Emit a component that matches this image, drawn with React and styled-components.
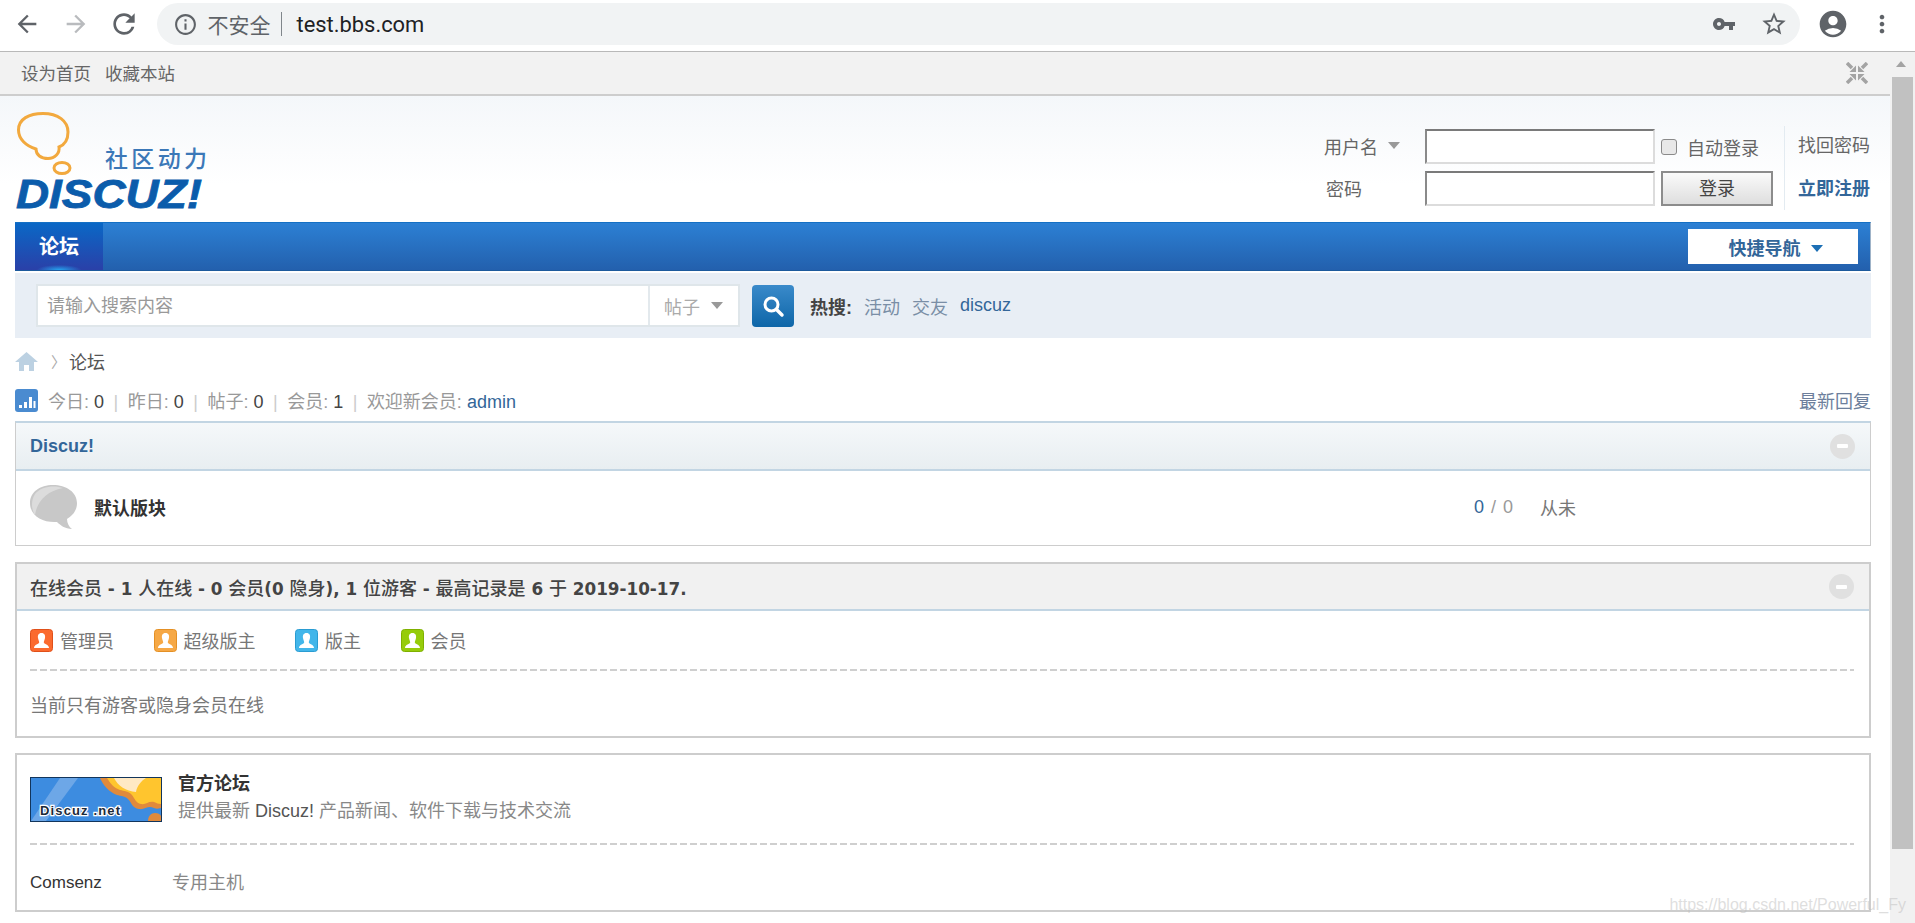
import React from "react";
import styled, { createGlobalStyle } from "styled-components";
import {
  MdArrowBack,
  MdArrowForward,
  MdRefresh,
  MdInfoOutline,
  MdVpnKey,
  MdStarBorder,
  MdAccountCircle,
  MdMoreVert,
} from "react-icons/md";

const GlobalStyle = createGlobalStyle`
  html, body {
    margin: 0;
    height: 100%;
    overflow: hidden;
    background: #fff;
  }
  body {
    font-family: "Liberation Sans", "Noto Sans CJK SC", sans-serif;
    font-size: 18px;
    color: #444;
  }
  * {
    box-sizing: border-box;
  }
`;

const Window = styled.div`
  height: 923px;
  display: flex;
  flex-direction: column;
  overflow: hidden;
  position: relative;
`;

const BrowserBar = styled.div`
  height: 52px;
  flex: none;
  display: flex;
  align-items: center;
  padding: 0 9px 3px 3px;
  border-bottom: 1px solid #b9b9b9;
  background: #fff;
`;

const BarButton = styled.div`
  width: 48.5px;
  height: 36px;
  flex: none;
  display: flex;
  align-items: center;
  justify-content: center;
  color: ${(p) => (p.$off ? "#b9bbbe" : "#5f6368")};
  font-size: ${(p) => p.$size || 28}px;
`;

const AddressPill = styled.div`
  flex: 1;
  height: 42px;
  margin: 0 9px 0 8px;
  padding: 0 12px 0 16px;
  display: flex;
  align-items: center;
  background: #f1f3f4;
  border-radius: 21px;
  color: #5f6368;
`;

const SecureLabel = styled.span`
  margin-left: 10px;
  font-size: 21px;
  color: #5f6368;
`;

const PillDivider = styled.span`
  width: 1px;
  height: 24px;
  margin: 0 15px 0 10px;
  background: #80868b;
`;

const Url = styled.span`
  flex: 1;
  font-family: Roboto, sans-serif;
  font-size: 21.9px;
  color: #202124;
`;

const PillIcons = styled.div`
  display: flex;
  align-items: center;
  gap: 24px;
  font-size: 24px;
`;

const MainRow = styled.div`
  flex: 1;
  display: flex;
  min-height: 0;
`;

const Viewport = styled.div`
  flex: 1;
  min-width: 0;
  background: #fff;
`;

const Scrollbar = styled.div`
  width: 25px;
  flex: none;
  background: #f1f1f1;
`;

const ScrollArrow = styled.div`
  height: 25px;
  padding: 9px 0 0 6px;
  &::before {
    content: "";
    display: block;
    width: 0;
    border-left: 5.5px solid transparent;
    border-right: 5.5px solid transparent;
    border-bottom: 6px solid #a3a3a3;
  }
`;

const ScrollThumb = styled.div`
  width: 21px;
  height: 772px;
  margin-left: 2px;
  background: #c1c1c1;
`;

const Toolbar = styled.div`
  height: 44px;
  padding: 0 22px 0 21px;
  display: flex;
  align-items: center;
  justify-content: space-between;
  background: #f2f2f2;
  border-bottom: 2px solid #cdcdcd;
  font-size: 17.5px;
  color: #666;
`;

const ToolLinks = styled.div`
  display: flex;
  gap: 14px;
  margin-bottom: 2px;
`;

const Header = styled.div`
  height: 126px;
  padding: 0 19px 0 15px;
  display: flex;
  justify-content: space-between;
  background: linear-gradient(#f4f7fa, #fff 70%);
`;

const Logo = styled.svg`
  width: 192px;
  height: 102px;
  margin-top: 14px;
  flex: none;
  overflow: visible;
`;

const LoginForm = styled.div`
  display: flex;
  align-items: flex-start;
  margin-top: 33px;
`;

const LoginFields = styled.div`
  display: grid;
  grid-template-columns: 95px 230px 112px;
  grid-auto-rows: 35px;
  column-gap: 6px;
  row-gap: 7px;
  align-items: center;
`;

const FieldLabel = styled.div`
  display: flex;
  align-items: center;
  margin-bottom: 2px;
  padding-left: ${(p) => p.$indent || 0}px;
  color: #666;
`;

const Caret = styled.span`
  display: inline-block;
  width: 0;
  margin-left: ${(p) => p.$gap || 10}px;
  margin-top: ${(p) => p.$drop || 0}px;
  border-left: 6px solid transparent;
  border-right: 6px solid transparent;
  border-top: 7px solid ${(p) => p.$color || "#999"};
`;

const TextInput = styled.div`
  height: 35px;
  background: #fff;
  border: 2px solid;
  border-color: #7a7a7a #dcdcdc #dcdcdc #8a8a8a;
`;

const AutoLogin = styled.label`
  display: flex;
  align-items: center;
  color: #666;
`;

const CheckBox = styled.span`
  width: 16px;
  height: 16px;
  margin-right: 10px;
  border: 1px solid #8a8a8a;
  border-radius: 3px;
  background: #e8e8e8;
`;

const LoginButton = styled.div`
  height: 35px;
  padding-bottom: 3px;
  display: flex;
  align-items: center;
  justify-content: center;
  border: 2px solid #8c8c8c;
  background: linear-gradient(#fafafa, #dedede);
  color: #444;
`;

const LoginLinks = styled.div`
  width: 87px;
  height: 84px;
  margin: -3px 0 0 11px;
  padding: 8px 0 0 13px;
  display: flex;
  flex-direction: column;
  gap: 18px;
  border-left: 1px solid #e3ebf1;
  line-height: 25px;
  white-space: nowrap;
`;

const LoginLink = styled.span`
  color: ${(p) => (p.$strong ? "#336699" : "#666")};
  font-weight: ${(p) => (p.$strong ? 700 : 400)};
`;

const Content = styled.div`
  padding: 0 19px 0 15px;
`;

const NavBar = styled.div`
  height: 49px;
  display: flex;
  align-items: center;
  justify-content: space-between;
  background: linear-gradient(#2c80d4, #2360ad);
  border-top: 1px solid #1570c4;
  border-bottom: 1px solid #1d5a9c;
  border-right: 1px solid #9fb3c8;
`;

const NavTab = styled.div`
  position: relative;
  width: 88px;
  height: 100%;
  padding-bottom: 2px;
  display: flex;
  align-items: center;
  justify-content: center;
  background: linear-gradient(#0a68c6, #2a40a8);
  color: #fff;
  font-size: 20px;
  font-weight: 700;
  &::after {
    content: "";
    position: absolute;
    left: 22px;
    right: 22px;
    bottom: 0;
    height: 5px;
    background: radial-gradient(ellipse at bottom, #26a5f0, transparent 72%);
  }
`;

const QuickNav = styled.div`
  width: 170px;
  height: 35px;
  margin-right: 12px;
  padding-left: 5px;
  display: flex;
  align-items: center;
  justify-content: center;
  background: #fff;
  color: #336699;
  font-weight: 700;
`;

const SearchBar = styled.div`
  height: 65px;
  margin-top: 2px;
  padding-left: 21px;
  display: flex;
  align-items: center;
  background: #e8eef5;
`;

const SearchBox = styled.div`
  width: 704px;
  height: 43px;
  display: flex;
  background: #fff;
  border: 2px solid #dfe6ea;
`;

const SearchHint = styled.div`
  flex: 1;
  padding-left: 9px;
  line-height: 41px;
  color: #999;
`;

const SearchType = styled.div`
  width: 90px;
  display: flex;
  align-items: center;
  padding-left: 14px;
  border-left: 2px solid #e3e9ed;
  color: #aaa;
`;

const SearchButton = styled.div`
  width: 42px;
  height: 42px;
  margin-left: 12px;
  display: flex;
  align-items: center;
  justify-content: center;
  border-radius: 4px;
  background: linear-gradient(#3a8aca, #0e66a8);
`;

const HotWords = styled.div`
  margin-left: 16px;
  display: flex;
  align-items: center;
  gap: 12px;
`;

const HotTitle = styled.b`
  color: #444;
`;

const HotLink = styled.span`
  color: ${(p) => (p.$dark ? "#336699" : "#7a8ea6")};
`;

const Crumb = styled.div`
  height: 22px;
  margin-top: 12px;
  display: flex;
  align-items: center;
  color: #555;
`;

const CrumbSep = styled.span`
  margin: 0 3px 0 13px;
  color: #aaa;
  font-size: 15px;
`;

const StatRow = styled.div`
  height: 22px;
  margin-top: 17px;
  margin-bottom: 10px;
  display: flex;
  align-items: center;
  justify-content: space-between;
`;

const Stats = styled.div`
  display: flex;
  align-items: center;
  color: #999;
`;

const StatText = styled.span`
  white-space: pre;
`;

const StatNum = styled.span`
  color: #444;
`;

const StatSep = styled.span`
  margin: 0 9.500px;
  color: #ccc;
`;

const StatLink = styled.span`
  color: #336699;
`;

const LatestLink = styled.span`
  color: #6d7f9c;
`;

const Section = styled.div`
  height: ${(p) => p.$height}px;
  margin-bottom: ${(p) => p.$gap || 0}px;
  background: #fff;
  border: ${(p) => p.$border || 2}px solid #cdcdcd;
  ${(p) => p.$blueTop && "border-top: 2px solid #c2d5e3;"}
`;

const SectionHead = styled.div`
  height: ${(p) => p.$height}px;
  padding: 0 15px 0 ${(p) => p.$left}px;
  display: flex;
  align-items: center;
  justify-content: space-between;
  background: ${(p) => p.$bg};
  border-bottom: 2px solid #c2d5e3;
`;

const BoardTitle = styled.span`
  color: #336699;
  font-weight: 700;
`;

const OnlineTitle = styled.span`
  color: #444;
  font-weight: 500;
  white-space: pre;
`;

const OnlineLatin = styled.b`
  font-family: "DejaVu Sans", sans-serif;
  font-size: 16.8px;
`;

const Collapse = styled.span`
  width: 25px;
  height: 25px;
  display: flex;
  align-items: center;
  justify-content: center;
  border-radius: 50%;
  background: #e0e0e0;
  &::before {
    content: "";
    width: 11px;
    height: 4px;
    border-radius: 1px;
    background: #fff;
  }
`;

const ForumRow = styled.div`
  height: 72px;
  padding-left: 13px;
  display: grid;
  grid-template-columns: 65px 1fr 66px 330px;
  align-items: center;
`;

const ForumName = styled.span`
  color: #333;
  font-weight: 700;
`;

const Counts = styled.span`
  color: #999;
  white-space: nowrap;
  word-spacing: 2px;
`;

const CountNum = styled.span`
  color: #336699;
`;

const NeverText = styled.span`
  color: #777;
`;

const Inner = styled.div`
  padding: 0 15px 0 13px;
`;

const DashLine = styled.div`
  height: 2px;
  background: repeating-linear-gradient(90deg, #cfcfcf 0 7px, transparent 7px 10px);
`;

const Legend = styled.div`
  height: 58px;
  display: flex;
  align-items: center;
  gap: 39.500px;
`;

const LegendItem = styled.div`
  display: flex;
  align-items: center;
  gap: 7px;
  color: #777;
`;

const Notice = styled.div`
  height: 66px;
  display: flex;
  align-items: center;
  color: #777;
`;

const LinkCard = styled.div`
  height: 88px;
  padding-top: 16px;
  display: flex;
  gap: 16px;
`;

const LinkBanner = styled.svg`
  width: 132px;
  height: 45px;
  margin-top: 6px;
  flex: none;
`;

const LinkTitle = styled.div`
  line-height: 27px;
  color: #333;
  font-weight: 700;
`;

const LinkDesc = styled.div`
  line-height: 27px;
  color: #888;
`;

const DescLatin = styled.span`
  color: #555;
`;

const TextLinks = styled.div`
  height: 64px;
  padding-top: 12px;
  display: grid;
  grid-template-columns: 142px auto 1fr;
  align-items: center;
`;

const CompanyName = styled.span`
  font-size: 17px;
  color: #333;
`;

const Watermark = styled.div`
  position: absolute;
  right: 9px;
  bottom: 9px;
  font-size: 16px;
  color: rgba(190, 190, 190, 0.5);
  pointer-events: none;
`;

const ShrinkIcon = () => (
  <svg width="22" height="22" viewBox="0 0 22 22" fill="#a3a3a3" stroke="#a3a3a3">
    <path d="M1 1L6 6M21 1L16 6M1 21L6 16M21 21L16 16" strokeWidth="3.500" />
    <path d="M10 10V3.500L3.500 10zM12 10V3.500L18.500 10zM10 12V18.500L3.500 12zM12 12V18.500L18.500 12z" stroke="none" />
  </svg>
);

const DiscuzLogo = () => (
  <Logo viewBox="0 0 192 102">
    <path
      d="M3.500 20C3.500 9 14 3.500 28 3.500C43 3.500 53 11 53 22C53 30 49 35 44 37C45 43 40 48.500 33 48.500C26 48.500 21 45 21 39C11 36 3.500 29 3.500 20Z"
      fill="none"
      stroke="#f2a93e"
      strokeWidth="3"
    />
    <ellipse cx="47" cy="58" rx="8" ry="5.500" fill="none" stroke="#f2a93e" strokeWidth="3" />
    <text
      x="90"
      y="57"
      fontFamily="Noto Sans CJK SC"
      fontSize="23"
      fontWeight="500"
      fill="#3b78b8"
      textLength="102"
    >
      社区动力
    </text>
    <text
      x="1"
      y="98"
      fontFamily="Liberation Sans"
      fontSize="40"
      fontWeight="700"
      fontStyle="italic"
      fill="#0b5cab"
      stroke="#0b5cab"
      strokeWidth="0.800"
      textLength="186"
      lengthAdjust="spacingAndGlyphs"
    >
      DISCUZ!
    </text>
  </Logo>
);

const SearchIcon = () => (
  <svg width="24" height="24" viewBox="0 0 24 24" fill="none" stroke="#fff">
    <circle cx="10.500" cy="10.500" r="6.500" strokeWidth="3" />
    <path d="M15.500 15.500L21 21" strokeWidth="3.500" strokeLinecap="round" />
  </svg>
);

const HomeIcon = () => (
  <svg width="23" height="20" viewBox="0 0 23 20" fill="#bcd1e2">
    <path d="M11.500 1L23 11h-4v9h-5v-6H9v6H4v-9H0z" />
  </svg>
);

const StatIcon = () => (
  <svg width="23" height="23" viewBox="0 0 23 23" style={{ marginRight: 10 }}>
    <rect width="23" height="23" rx="3" fill="#4a8bd0" />
    <path d="M4 16h3v3H4zM9 13h3v6H9zM14 8h3v11h-3zM18.500 12h2v7h-2z" fill="#fff" />
  </svg>
);

const BubbleIcon = () => (
  <svg width="49" height="46" viewBox="0 0 49 46">
    <path
      d="M24 1C37 1 48 8 48 19C48 27 43 32 38 35C38 39 40 43 43 45C36 45 31 41 28 38C14 39 1 32 1 19C1 8 11 1 24 1Z"
      fill="#c8c8c8"
    />
    <path d="M6 31C8 17 18 7 34 4C26 1 12 2 6 10C2 16 2 25 6 31Z" fill="#dcdcdc" />
  </svg>
);

const GroupIcon = ({ color, edge }) => (
  <svg width="23" height="23" viewBox="0 0 23 23">
    <rect x="0.500" y="0.500" width="22" height="22" rx="3" fill={color} stroke={edge} />
    <path
      d="M11.500 4C14.500 4 15.500 6.500 15 9C14.700 11 13.800 12 13.800 13.500C13.800 15 19 15.500 19 19H4C4 15.500 9.200 15 9.200 13.500C9.200 12 8.300 11 8 9C7.500 6.500 8.500 4 11.500 4Z"
      fill="#fff"
    />
  </svg>
);

const BannerArt = () => (
  <LinkBanner viewBox="0 0 132 45">
    <rect x="0.500" y="0.500" width="131" height="44" fill="#3d8ce0" stroke="#12355c" />
    <path d="M30 1h18L16 44H1z" fill="#a8c8f0" opacity="0.450" />
    <path
      d="M70 1h61v30c-3 1-5 1-7 0c-6-3-9 2-15 1c-7-1-7-6-11-10c-3-3-7-3-11-4c-8-3-14-10-17-17z"
      fill="#e08a3c"
    />
    <path
      d="M77 1h54v26c-3 0-4-1-7-2c-6-1-8 3-13 2c-5-1-6-5-9-9c-3-4-8-4-12-5c-6-2-10-7-13-12z"
      fill="#ffc52e"
    />
    <path d="M84 1h32c-5 3-9 8-10 14c-10-1-18-6-22-14z" fill="#ffe9c4" />
    <path d="M118 44c0-5 3-8 7-8c3 0 5 1 6 3v5z" fill="#e08a3c" />
    <text
      x="10"
      y="38"
      fontFamily="Liberation Sans"
      fontSize="13"
      fontWeight="700"
      fill="#1c2a3a"
      stroke="#fff"
      strokeWidth="2.500"
      paintOrder="stroke"
      textLength="80"
    >
      Discuz .net
    </text>
  </LinkBanner>
);

const groups = [
  { name: "管理员", color: "#fb6a2e", edge: "#e0501a" },
  { name: "超级版主", color: "#f6a845", edge: "#e49025" },
  { name: "版主", color: "#42b6ea", edge: "#2a9cd2" },
  { name: "会员", color: "#96cc0a", edge: "#7fb000" },
];

const stats = [
  ["今日", "0"],
  ["昨日", "0"],
  ["帖子", "0"],
  ["会员", "1"],
];

const App = () => {
  return (
    <Window>
      <GlobalStyle />
      <BrowserBar>
        <BarButton><MdArrowBack /></BarButton>
        <BarButton $off><MdArrowForward /></BarButton>
        <BarButton $size={32}><MdRefresh /></BarButton>
        <AddressPill>
          <MdInfoOutline size={25} />
          <SecureLabel>不安全</SecureLabel>
          <PillDivider />
          <Url>test.bbs.com</Url>
          <PillIcons>
            <MdVpnKey />
            <MdStarBorder size={28} />
          </PillIcons>
        </AddressPill>
        <BarButton $size={32}><MdAccountCircle /></BarButton>
        <BarButton><MdMoreVert /></BarButton>
      </BrowserBar>
      <MainRow>
        <Viewport>
          <Toolbar>
            <ToolLinks>
              <span>设为首页</span>
              <span>收藏本站</span>
            </ToolLinks>
            <ShrinkIcon />
          </Toolbar>
          <Header>
            <DiscuzLogo />
            <LoginForm>
              <LoginFields>
                <FieldLabel>
                  用户名
                  <Caret />
                </FieldLabel>
                <TextInput />
                <AutoLogin>
                  <CheckBox />
                  自动登录
                </AutoLogin>
                <FieldLabel $indent={2}>密码</FieldLabel>
                <TextInput />
                <LoginButton>登录</LoginButton>
              </LoginFields>
              <LoginLinks>
                <LoginLink>找回密码</LoginLink>
                <LoginLink $strong>立即注册</LoginLink>
              </LoginLinks>
            </LoginForm>
          </Header>
          <Content>
            <NavBar>
              <NavTab>论坛</NavTab>
              <QuickNav>
                快捷导航
                <Caret $color="#1c6fb5" $gap={10} $drop={3} />
              </QuickNav>
            </NavBar>
            <SearchBar>
              <SearchBox>
                <SearchHint>请输入搜索内容</SearchHint>
                <SearchType>
                  帖子
                  <Caret $gap={11} />
                </SearchType>
              </SearchBox>
              <SearchButton>
                <SearchIcon />
              </SearchButton>
              <HotWords>
                <HotTitle>热搜:</HotTitle>
                <HotLink>活动</HotLink>
                <HotLink>交友</HotLink>
                <HotLink $dark>discuz</HotLink>
              </HotWords>
            </SearchBar>
            <Crumb>
              <HomeIcon />
              <CrumbSep>〉</CrumbSep>
              论坛
            </Crumb>
            <StatRow>
              <Stats>
                <StatIcon />
                <StatText>
                  {stats.map(([label, num]) => (
                    <React.Fragment key={label}>
                      {label}: <StatNum>{num}</StatNum>
                      <StatSep>|</StatSep>
                    </React.Fragment>
                  ))}
                  欢迎新会员: <StatLink>admin</StatLink>
                </StatText>
              </Stats>
              <LatestLink>最新回复</LatestLink>
            </StatRow>
            <Section $height={125} $gap={16} $border={1} $blueTop>
              <SectionHead $height={48} $left={14} $bg="linear-gradient(#f5f8fa, #e8eef1)">
                <BoardTitle>Discuz!</BoardTitle>
                <Collapse />
              </SectionHead>
              <ForumRow>
                <BubbleIcon />
                <ForumName>默认版块</ForumName>
                <Counts>
                  <CountNum>0</CountNum> / 0
                </Counts>
                <NeverText>从未</NeverText>
              </ForumRow>
            </Section>
            <Section $height={176} $gap={15}>
              <SectionHead $height={47} $left={13} $bg="#f1f1f1">
                <OnlineTitle>
                  在线会员<OnlineLatin> - 1 </OnlineLatin>人在线<OnlineLatin> - 0 </OnlineLatin>会员<OnlineLatin>(0 </OnlineLatin>隐身<OnlineLatin>), 1 </OnlineLatin>位游客<OnlineLatin> - </OnlineLatin>最高记录是<OnlineLatin> 6 </OnlineLatin>于<OnlineLatin> 2019-10-17.</OnlineLatin>
                </OnlineTitle>
                <Collapse />
              </SectionHead>
              <Inner>
                <Legend>
                  {groups.map((g) => (
                    <LegendItem key={g.name}>
                      <GroupIcon color={g.color} edge={g.edge} />
                      {g.name}
                    </LegendItem>
                  ))}
                </Legend>
                <DashLine />
                <Notice>当前只有游客或隐身会员在线</Notice>
              </Inner>
            </Section>
            <Section $height={159}>
              <Inner>
                <LinkCard>
                  <BannerArt />
                  <div>
                    <LinkTitle>官方论坛</LinkTitle>
                    <LinkDesc>
                      提供最新 <DescLatin>Discuz!</DescLatin> 产品新闻、软件下载与技术交流
                    </LinkDesc>
                  </div>
                </LinkCard>
                <DashLine />
                <TextLinks>
                  <CompanyName>Comsenz</CompanyName>
                  <LinkDesc>专用主机</LinkDesc>
                </TextLinks>
              </Inner>
            </Section>
          </Content>
        </Viewport>
        <Scrollbar>
          <ScrollArrow />
          <ScrollThumb />
        </Scrollbar>
      </MainRow>
      <Watermark>https://blog.csdn.net/Powerful_Fy</Watermark>
    </Window>
  );
};

export default App;
